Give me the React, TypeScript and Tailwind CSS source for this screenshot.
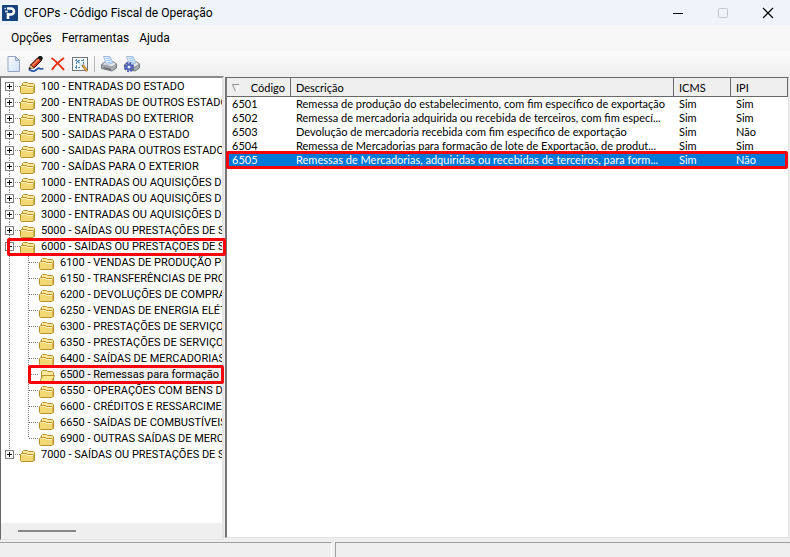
import clsx from 'clsx'

type Node = { code: string; name: string; children?: Node[] }

const tree: Node[] = [
  { code: '100', name: 'ENTRADAS DO ESTADO' },
  { code: '200', name: 'ENTRADAS DE OUTROS ESTADOS' },
  { code: '300', name: 'ENTRADAS DO EXTERIOR' },
  { code: '500', name: 'SAIDAS PARA O ESTADO' },
  { code: '600', name: 'SAIDAS PARA OUTROS ESTADOS' },
  { code: '700', name: 'SAÍDAS PARA O EXTERIOR' },
  { code: '1000', name: 'ENTRADAS OU AQUISIÇÕES DE SERVIÇOS' },
  { code: '2000', name: 'ENTRADAS OU AQUISIÇÕES DE SERVIÇOS' },
  { code: '3000', name: 'ENTRADAS OU AQUISIÇÕES DE SERVIÇOS' },
  { code: '5000', name: 'SAÍDAS OU PRESTAÇÕES DE SERVIÇOS' },
  {
    code: '6000',
    name: 'SAÍDAS OU PRESTAÇÕES DE SERVIÇOS',
    children: [
      { code: '6100', name: 'VENDAS DE PRODUÇÃO PRÓPRIA' },
      { code: '6150', name: 'TRANSFERÊNCIAS DE PRODUÇÃO' },
      { code: '6200', name: 'DEVOLUÇÕES DE COMPRAS' },
      { code: '6250', name: 'VENDAS DE ENERGIA ELÉTRICA' },
      { code: '6300', name: 'PRESTAÇÕES DE SERVIÇOS' },
      { code: '6350', name: 'PRESTAÇÕES DE SERVIÇOS' },
      { code: '6400', name: 'SAÍDAS DE MERCADORIAS' },
      { code: '6500', name: 'Remessas para formação de lote' },
      { code: '6550', name: 'OPERAÇÕES COM BENS DE ATIVO' },
      { code: '6600', name: 'CRÉDITOS E RESSARCIMENTOS' },
      { code: '6650', name: 'SAÍDAS DE COMBUSTÍVEIS' },
      { code: '6900', name: 'OUTRAS SAÍDAS DE MERCADORIAS' },
    ],
  },
  { code: '7000', name: 'SAÍDAS OU PRESTAÇÕES DE SERVIÇOS' },
]

const rows = [
  ['6501', 'Remessa de produção do estabelecimento, com fim específico de exportação', 'Sim', 'Sim'],
  ['6502', 'Remessa de mercadoria adquirida ou recebida de terceiros, com fim especí...', 'Sim', 'Sim'],
  ['6503', 'Devolução de mercadoria recebida com fim específico de exportação', 'Sim', 'Não'],
  ['6504', 'Remessa de Mercadorias para formação de lote de Exportação, de produt...', 'Sim', 'Sim'],
  ['6505', 'Remessas de Mercadorias, adquiridas ou recebidas de terceiros, para form...', 'Sim', 'Não'],
]

function Logo() {
  return (
    <svg width="16" height="16" viewBox="0 0 16 16">
      <rect width="16" height="16" rx="1" fill="#15427c" />
      <path d="M6 14V8" stroke="#fff" strokeWidth="2.600" />
      <path d="M5 3.500h4a3 3 0 0 1 0 6H6" fill="none" stroke="#fff" strokeWidth="2.600" />
      <path d="M2.500 3.500h1.500M3 6.500h3" stroke="#dfe8f5" strokeWidth="1.600" />
    </svg>
  )
}

function NewIcon() {
  return (
    <svg width="16" height="18" viewBox="0 0 16 18">
      <defs>
        <linearGradient id="paper" x1="0" y1="0" x2="1" y2="1">
          <stop offset="0" stopColor="#fbfdff" />
          <stop offset="1" stopColor="#cfdff5" />
        </linearGradient>
      </defs>
      <path d="M2 1.500h7.500l4 4v11H2z" fill="url(#paper)" stroke="#94a6c2" />
      <path d="M9.500 1.500v4h4z" fill="#b9cbe6" stroke="#94a6c2" />
    </svg>
  )
}

function EditIcon() {
  return (
    <svg width="18" height="18" viewBox="0 0 18 18">
      <path d="M2 14.500c2 1.500 5 2 7 .5s2-2.500 3.500-1.500 2 .5 4 0" fill="none" stroke="#2857a8" strokeWidth="1.700" />
      <path d="M3.500 10 11 2.500l3.500 3L7 13z" fill="#c8321e" stroke="#3a120c" />
      <path d="M5.500 10.500 12 4" stroke="#f58a55" strokeWidth="1.600" />
      <path d="M2 14 3.500 10 7 13z" fill="#f0c890" stroke="#5a3a18" strokeWidth=".6" />
      <path d="m10.500 3 1.500-2h2.500l1.500 2-1.500 3z" fill="#1c1c1c" />
      <path d="M1.500 14.500 2.500 12l1.500 1.500z" fill="#111" />
    </svg>
  )
}

function DeleteIcon() {
  return (
    <svg width="16" height="16" viewBox="0 0 16 16">
      <path d="M1.500 2C6 5 10 9.500 14 14M14 2C9 5.500 4.500 9.500 2 14" fill="none" stroke="#e8300f" strokeWidth="1.900" />
    </svg>
  )
}

function ViewIcon() {
  return (
    <svg width="18" height="18" viewBox="0 0 18 18">
      <rect x="1.500" y="2.500" width="15" height="13" fill="#f6f9fb" stroke="#6f7478" />
      <path d="M4 5.500h9M5.500 4v10M12.500 4v5M4 12.500h6" fill="none" stroke="#4c86b4" strokeDasharray="2 1" />
      <path d="m6 6 6 5" stroke="#3f7fae" strokeWidth="1.200" />
      <path d="M8 8h3v3H8z" fill="#d4ecf8" />
      <path d="m11.500 10 4.500 6" stroke="#7c5a22" strokeWidth="2.600" />
      <path d="m12 10.500 4 5.500" stroke="#e8b552" strokeWidth="1.400" />
    </svg>
  )
}

function PrintIcon({ gear = false }: { gear?: boolean }) {
  return (
    <svg width="18" height="18" viewBox="0 0 18 18">
      <path d="M1.500 9.500 5 7h8.500l3 2v4L12 16l-10.500-2.500z" fill="#a9acb2" stroke="#74777e" />
      <path d="M1.500 9.500 5 7h8.500l3 2-4.500 3z" fill="#e4e6e9" stroke="#85888f" strokeWidth=".8" />
      <path d="M3.500 1.500H10l3 6.500-6.500 1.500z" fill="#e8f2fe" stroke="#a5bbdb" />
      <path d="m5.500 3.500 4.500-.5M6.500 5.500l4.500-.5M7.500 7.500l4-.5" stroke="#8fc2f8" />
      <path d="m3.500 12.500 7.500 2" stroke="#50545c" />
      {gear && (
        <g fill="none">
          <circle cx="6" cy="12" r="4" stroke="#4658b4" strokeWidth="2.400" strokeDasharray="1.600 1.540" />
          <circle cx="6" cy="12" r="2.500" fill="#e6eafc" stroke="#5263bd" strokeWidth="2" />
        </g>
      )}
    </svg>
  )
}

function Folder({ open = false }: { open?: boolean }) {
  return (
    <svg width="16" height="13" viewBox="0 0 16 13" className="shrink-0 self-end">
      <path d="M2.500 11.500V2.500l1-1h4l1 1h5l1 1v8z" fill="#f9e99a" stroke="#b98f2c" />
      {open ? (
        <path d="M1 12.500 3.500 6.500h12L13 12.500z" fill="#fbe88e" stroke="#b98f2c" />
      ) : (
        <path d="M.5 11.500v-6l1-1h5l1 1h5.500l1 1v5l-1 1h-11.500z" fill="#f2d873" stroke="#b98f2c" />
      )}
      {!open && <path d="M1.500 5.500H6l1 1h6" fill="none" stroke="#fdf4bd" />}
    </svg>
  )
}

/* Thick outline marking the rows to look at */
function Mark({ className }: { className: string }) {
  return <span className={clsx('pointer-events-none absolute z-10 rounded-xs border-3 border-[#fb0007]', className)} />
}

function Toggle({ open, first, last }: { open: boolean; first: boolean; last: boolean }) {
  return (
    <button aria-label={open ? 'Recolher' : 'Expandir'} className="h-4 w-[19px] shrink-0">
      <svg width="19" height="16" viewBox="0 0 19 16">
        {!first && <path d="M8.500 0v4" stroke="#808080" strokeDasharray="1 1" />}
        {!last && <path d="M8.500 13v3" stroke="#808080" strokeDasharray="1 1" />}
        <path d="M14 8.500h5" stroke="#808080" strokeDasharray="1 1" />
        <rect x="4.500" y="4.500" width="8" height="8" fill="#fff" stroke="#808080" />
        <path d={open ? 'M6 8.500h5' : 'M6 8.500h5M8.500 6v5'} stroke="#000" />
      </svg>
    </button>
  )
}

function ChildLines({ last }: { last: boolean }) {
  return (
    <svg width="38" height="16" viewBox="0 0 38 16" className="shrink-0">
      <path
        d={last ? 'M8.500 0v16M27.500 0v8M28 8.500h10' : 'M8.500 0v16M27.500 0v16M28 8.500h10'}
        fill="none"
        stroke="#808080"
        strokeDasharray="1 1"
      />
    </svg>
  )
}

function TreeItem({ node, first, last }: { node: Node; first: boolean; last: boolean }) {
  return (
    <li role="treeitem" aria-expanded={!!node.children}>
      <div className="relative flex h-4 items-center">
        <Toggle open={!!node.children} first={first} last={last} />
        <Folder />
        <span className="ml-[5px] min-w-0 flex-1 overflow-hidden pt-0.5 whitespace-nowrap">
          {node.code} - {node.name}
        </span>
        {node.code === '6000' && <Mark className="top-0 -right-1 -bottom-0.5 left-1.5" />}
      </div>
      {node.children && (
        <ul role="group">
          {node.children.map((child, i) => {
            const selected = child.code === '6500'
            return (
              <li key={child.code} role="treeitem" aria-selected={selected} className="relative flex h-4 items-center">
                <ChildLines last={i === node.children!.length - 1} />
                <Folder open={selected} />
                <span
                  className={clsx(
                    'ml-[5px] min-w-0 flex-1 overflow-hidden pt-0.5 whitespace-nowrap',
                    selected && 'bg-[#efefef]',
                  )}
                >
                  {child.code} - {child.name}
                </span>
                {selected && <Mark className="-top-px -right-0.5 -bottom-0.5 left-[27px]" />}
              </li>
            )
          })}
        </ul>
      )}
    </li>
  )
}

function TitleBar() {
  return (
    <header className="flex h-[25px] items-center bg-[#eff3fa] pl-0.5">
      <Logo />
      <h1 className="ml-1.5 flex-1 text-[12px]">CFOPs - Código Fiscal de Operação</h1>
      <div className="flex">
        <button aria-label="Minimizar" className="flex w-[45px] justify-center">
          <svg width="12" height="12" viewBox="0 0 12 12"><path d="M1 6.500h10" stroke="#000" /></svg>
        </button>
        <button aria-label="Maximizar" disabled className="flex w-[45px] justify-center">
          <svg width="12" height="12" viewBox="0 0 12 12">
            <rect x="1.500" y="1.500" width="9" height="9" rx="1" fill="none" stroke="#c3c6cc" />
          </svg>
        </button>
        <button aria-label="Fechar" className="flex w-[45px] justify-center">
          <svg width="12" height="12" viewBox="0 0 12 12"><path d="m1 1 10 10M11 1 1 11" stroke="#000" strokeWidth="1.200" /></svg>
        </button>
      </div>
    </header>
  )
}

export default function App() {
  return (
    <div className="flex min-h-screen flex-col bg-[#efefef] font-['Roboto','Open_Sans',sans-serif] text-[11px] leading-[14px] text-black">
      <TitleBar />

      <nav className="flex h-[26px] items-center gap-2.5 bg-[#f7f7f7] pl-[11px] text-[12px]">
        <button>Opções</button>
        <button>Ferramentas</button>
        <button>Ajuda</button>
      </nav>

      <div className="flex h-[25px] items-center gap-[5px] bg-linear-to-b from-[#fbfbfb] to-[#efefef] pt-px pl-1.5">
        <button aria-label="Novo"><NewIcon /></button>
        <button aria-label="Editar"><EditIcon /></button>
        <button aria-label="Excluir"><DeleteIcon /></button>
        <button aria-label="Visualizar"><ViewIcon /></button>
        <span className="h-4 w-px bg-[#b8b8b8]" />
        <button aria-label="Imprimir"><PrintIcon /></button>
        <button aria-label="Configurar impressão"><PrintIcon gear /></button>
      </div>

      <main className="flex flex-1 gap-px pr-px">
        <section className="flex w-56 flex-col border-t-2 border-r-2 border-b border-l border-t-[#8a8a8a] border-r-[#e3e3e3] border-b-[#e3e3e3] border-l-[#696969] bg-white">
          <ul role="tree" className="flex-1">
            {tree.map((node, i) => (
              <TreeItem key={node.code} node={node} first={i === 0} last={i === tree.length - 1} />
            ))}
          </ul>
          <div className="flex h-4 items-center bg-[#efefef] pl-[17px]">
            <div className="h-0.5 w-[58px] bg-[#868686]" />
          </div>
        </section>

        <section className="mt-px mb-0.5 min-w-0 flex-1 border-t border-r border-b border-l-2 border-t-[#696969] border-r-[#e3e3e3] border-b-[#e3e3e3] border-l-[#757575] bg-white">
          <table className="w-full table-fixed border-separate border-spacing-0 font-['Lato','Roboto',sans-serif]">
            <colgroup>
              <col className="w-16" />
              <col />
              <col className="w-[57px]" />
              <col className="w-[57px]" />
            </colgroup>
            <thead>
              <tr className="h-[19px] bg-[#efefef] text-left *:border-r *:border-b *:border-[#696969] *:pt-px *:pl-[5px] *:font-normal">
                <th>
                  <span className="flex items-center justify-between pr-[5px]">
                    <svg width="8" height="8" viewBox="0 0 8 8">
                      <path d="M7.500.5h-7l3 7" fill="none" stroke="#909090" />
                      <path d="m4 7.500 3.500-7" stroke="#fff" />
                    </svg>
                    Código
                  </span>
                </th>
                <th>Descrição</th>
                <th>ICMS</th>
                <th>IPI</th>
              </tr>
            </thead>
            <tbody>
              {rows.map(([code, description, icms, ipi]) => {
                const selected = code === '6505'
                return (
                  <tr
                    key={code}
                    aria-selected={selected}
                    className={clsx('h-3.5 *:pl-[5px]', selected && 'relative bg-[#0078d7] text-white')}
                  >
                    <td>
                      {code}
                      {selected && <Mark className="right-0 -left-px -top-0.5 -bottom-0.5" />}
                    </td>
                    <td className="truncate">{description}</td>
                    <td>{icms}</td>
                    <td>{ipi}</td>
                  </tr>
                )
              })}
            </tbody>
          </table>
        </section>
      </main>

      <footer className="mt-0.5 flex h-[15px] gap-[3px]">
        <div className="w-[42%] border-t border-r border-t-[#a0a0a0] border-r-white" />
        <div className="flex-1 border-t border-l border-[#a0a0a0]" />
      </footer>
    </div>
  )
}
